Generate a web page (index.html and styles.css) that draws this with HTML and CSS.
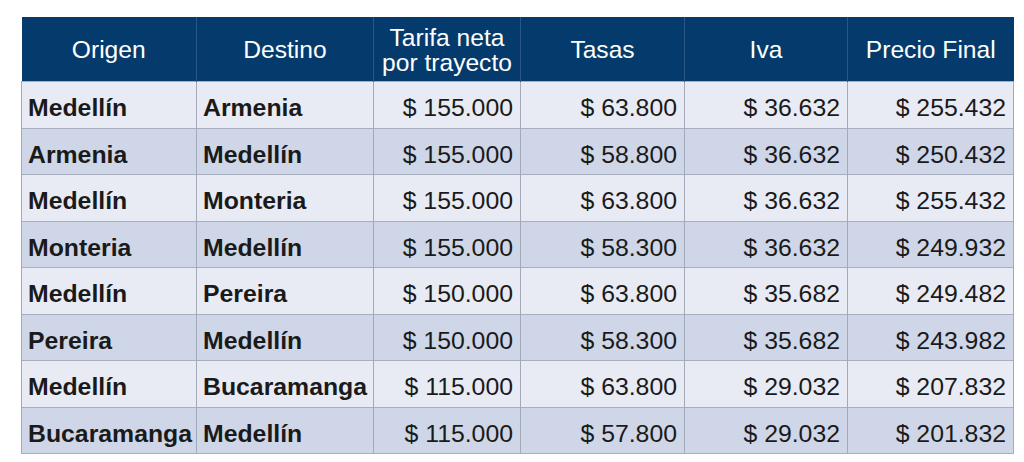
FILE: index.html
```html
<!DOCTYPE html>
<html lang="es">
<head>
<meta charset="utf-8">
<link rel="stylesheet" href="styles.css">
</head>
<body>
<table class="tarifas">
  <colgroup>
    <col class="c1"><col class="c2"><col class="c3"><col class="c4"><col class="c5"><col class="c6">
  </colgroup>
  <thead>
    <tr>
      <th>Origen</th>
      <th>Destino</th>
      <th class="two">Tarifa neta<br>por trayecto</th>
      <th>Tasas</th>
      <th>Iva</th>
      <th>Precio Final</th>
    </tr>
  </thead>
  <tbody>
    <tr><td class="city">Medellín</td><td class="city">Armenia</td><td class="num">$ 155.000</td><td class="num">$ 63.800</td><td class="num">$ 36.632</td><td class="num">$ 255.432</td></tr>
    <tr><td class="city">Armenia</td><td class="city">Medellín</td><td class="num">$ 155.000</td><td class="num">$ 58.800</td><td class="num">$ 36.632</td><td class="num">$ 250.432</td></tr>
    <tr><td class="city">Medellín</td><td class="city">Monteria</td><td class="num">$ 155.000</td><td class="num">$ 63.800</td><td class="num">$ 36.632</td><td class="num">$ 255.432</td></tr>
    <tr><td class="city">Monteria</td><td class="city">Medellín</td><td class="num">$ 155.000</td><td class="num">$ 58.300</td><td class="num">$ 36.632</td><td class="num">$ 249.932</td></tr>
    <tr><td class="city">Medellín</td><td class="city">Pereira</td><td class="num">$ 150.000</td><td class="num">$ 63.800</td><td class="num">$ 35.682</td><td class="num">$ 249.482</td></tr>
    <tr><td class="city">Pereira</td><td class="city">Medellín</td><td class="num">$ 150.000</td><td class="num">$ 58.300</td><td class="num">$ 35.682</td><td class="num">$ 243.982</td></tr>
    <tr><td class="city">Medellín</td><td class="city">Bucaramanga</td><td class="num">$ 115.000</td><td class="num">$ 63.800</td><td class="num">$ 29.032</td><td class="num">$ 207.832</td></tr>
    <tr><td class="city">Bucaramanga</td><td class="city">Medellín</td><td class="num">$ 115.000</td><td class="num">$ 57.800</td><td class="num">$ 29.032</td><td class="num">$ 201.832</td></tr>
  </tbody>
</table>
</body>
</html>
```

FILE: styles.css
```css
html, body {
  margin: 0;
  padding: 0;
  background: #ffffff;
}
body {
  padding: 17px 0 0 21px;
  font-family: "Liberation Sans", Arial, sans-serif;
}
.tarifas {
  border-collapse: collapse;
  table-layout: fixed;
  width: 992px;
  font-size: 24.8px;
  color: #1a1a1a;
}
.c1 { width: 175px; }
.c2 { width: 177px; }
.c3 { width: 147px; }
.c4 { width: 164px; }
.c5 { width: 163px; }
.c6 { width: 166px; }

.tarifas th {
  background: #053b6c;
  color: #ffffff;
  font-weight: normal;
  font-size: 24.6px;
  height: 63px;
  padding: 0;
  text-align: center;
  vertical-align: middle;
  line-height: 25px;
  border-left: 1px solid #2a5683;
}
.tarifas th:first-child { border-left: none; }
.tarifas th.two { line-height: 25px; padding-top: 1px; }

.tarifas td {
  height: 46.5px;
  box-sizing: border-box;
  padding: 7px 7px 0 7px;
  line-height: 24px;
  border-top: 1px solid #a7aebd;
  border-left: 1px solid #a2a9b9;
  border-right: 1px solid #a2a9b9;
  white-space: nowrap;
  overflow: visible;
}
.tarifas tbody tr:last-child td { border-bottom: 1px solid #a7aebd; }
.tarifas tbody tr:nth-child(odd) td { background: #e8ebf3; }
.tarifas tbody tr:nth-child(even) td { background: #ced6e7; }
.tarifas td.city { font-weight: bold; text-align: left; padding-left: 6px; }
.tarifas td.num { text-align: right; padding-right: 7px; }
```
